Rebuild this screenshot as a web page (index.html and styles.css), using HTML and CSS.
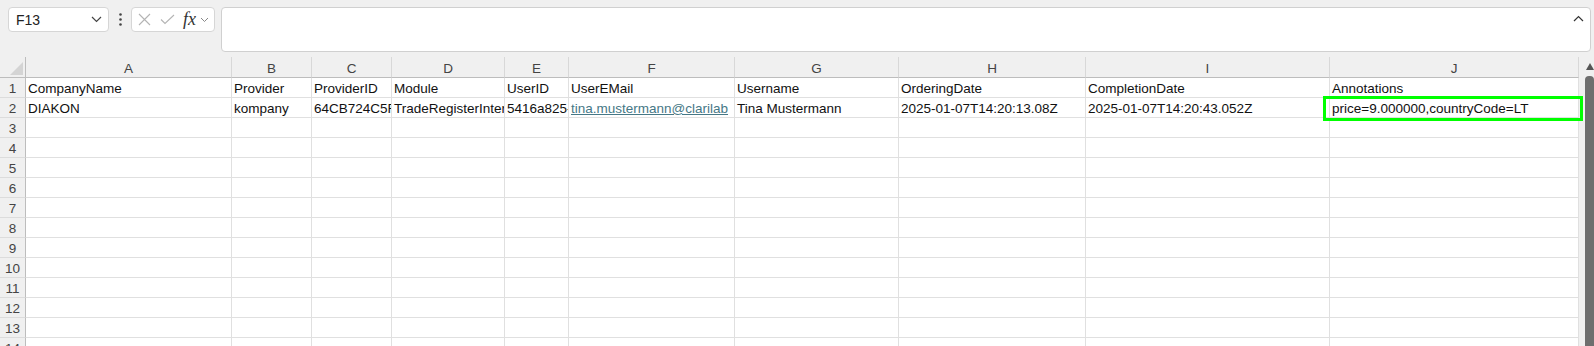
FILE: index.html
```html
<!DOCTYPE html>
<html lang="en">
<head>
    <meta charset="UTF-8">
    <title>Orders export</title>
    <link rel="stylesheet" href="styles.css">
</head>
<body>
    <!-- name box + formula bar -->
    <div class="toolbar">
        <div class="namebox">
            <span>F13</span>
            <svg width="11" height="7" viewBox="0 0 11 7"><polyline points="1,1 5.5,5.5 10,1" fill="none" stroke="#444" stroke-width="1.2"/></svg>
        </div>
        <div class="dots">
            <svg width="3" height="13" viewBox="0 0 3 13"><circle cx="1.5" cy="1.5" r="1.3" fill="#444"/><circle cx="1.5" cy="6.5" r="1.3" fill="#444"/><circle cx="1.5" cy="11.5" r="1.3" fill="#444"/></svg>
        </div>
        <div class="fxbox">
            <svg class="ico" width="13" height="13" viewBox="0 0 13 13"><path d="M1 1 L12 12 M12 1 L1 12" stroke="#b4b4b4" stroke-width="1.1"/></svg>
            <svg class="ico" width="15" height="11" viewBox="0 0 15 11"><polyline points="1,5.5 5,9.5 14,1" fill="none" stroke="#b4b4b4" stroke-width="1.1"/></svg>
            <span class="fx">fx</span>
            <svg width="9" height="6" viewBox="0 0 9 6"><polyline points="1,1 4.5,4.5 8,1" fill="none" stroke="#888" stroke-width="1"/></svg>
        </div>
        <div class="formula">
            <svg width="11" height="7" viewBox="0 0 11 7"><polyline points="1,6 5.5,1.5 10,6" fill="none" stroke="#333" stroke-width="1.2"/></svg>
        </div>
    </div>

    <div class="sheet">
        <div class="grid">
            <div class="row head">
                <div class="corner"><span class="tri"></span></div>
                <div>A</div><div>B</div><div>C</div><div>D</div><div>E</div><div>F</div><div>G</div><div>H</div><div>I</div><div>J</div>
            </div>
            <div class="row">
                <div class="rn">1</div>
                <div>CompanyName</div><div>Provider</div><div>ProviderID</div><div>Module</div><div>UserID</div><div>UserEMail</div><div>Username</div><div>OrderingDate</div><div>CompletionDate</div><div>Annotations</div>
            </div>
            <div class="row">
                <div class="rn">2</div>
                <div>DIAKON</div><div>kompany</div><div>64CB724C5FA</div><div>TradeRegisterInter</div><div>5416a825-</div><div><span class="link">tina.mustermann@clarilab</span></div><div>Tina Mustermann</div><div>2025-01-07T14:20:13.08Z</div><div>2025-01-07T14:20:43.052Z</div><div>price=9.000000,countryCode=LT</div>
            </div>
            <div class="row"><div class="rn">3</div><div></div><div></div><div></div><div></div><div></div><div></div><div></div><div></div><div></div><div></div></div>
            <div class="row"><div class="rn">4</div><div></div><div></div><div></div><div></div><div></div><div></div><div></div><div></div><div></div><div></div></div>
            <div class="row"><div class="rn">5</div><div></div><div></div><div></div><div></div><div></div><div></div><div></div><div></div><div></div><div></div></div>
            <div class="row"><div class="rn">6</div><div></div><div></div><div></div><div></div><div></div><div></div><div></div><div></div><div></div><div></div></div>
            <div class="row"><div class="rn">7</div><div></div><div></div><div></div><div></div><div></div><div></div><div></div><div></div><div></div><div></div></div>
            <div class="row"><div class="rn">8</div><div></div><div></div><div></div><div></div><div></div><div></div><div></div><div></div><div></div><div></div></div>
            <div class="row"><div class="rn">9</div><div></div><div></div><div></div><div></div><div></div><div></div><div></div><div></div><div></div><div></div></div>
            <div class="row"><div class="rn">10</div><div></div><div></div><div></div><div></div><div></div><div></div><div></div><div></div><div></div><div></div></div>
            <div class="row"><div class="rn">11</div><div></div><div></div><div></div><div></div><div></div><div></div><div></div><div></div><div></div><div></div></div>
            <div class="row"><div class="rn">12</div><div></div><div></div><div></div><div></div><div></div><div></div><div></div><div></div><div></div><div></div></div>
            <div class="row"><div class="rn">13</div><div></div><div></div><div></div><div></div><div></div><div></div><div></div><div></div><div></div><div></div></div>
            <div class="row"><div class="rn">14</div><div></div><div></div><div></div><div></div><div></div><div></div><div></div><div></div><div></div><div></div></div>
        </div>
        <div class="vscroll">
            <span class="up"></span>
            <div class="thumb"></div>
        </div>
        <!-- highlight drawn over J2 -->
        <div class="mark"></div>
    </div>
</body>
</html>
```

FILE: styles.css
```css
body {
    margin: 0;
    width: 1594px;
    height: 346px;
    overflow: hidden;
    background: #f0f0f0;
    font-family: "Liberation Sans", Arial, sans-serif;
    color: #111;
}
.toolbar {
    display: flex;
    align-items: flex-start;
    height: 57px;
    padding: 7px 3px 0 8px;
    box-sizing: border-box;
}
.namebox {
    width: 101px;
    height: 25px;
    box-sizing: border-box;
    background: #fff;
    border: 1px solid #d6d6d6;
    border-radius: 4px;
    display: flex;
    align-items: center;
    justify-content: space-between;
    padding: 0 6px 0 7px;
    font-size: 14px;
    color: #222;
}
.dots {
    width: 22px;
    height: 25px;
    display: flex;
    align-items: center;
    justify-content: center;
}
.fxbox {
    width: 84px;
    height: 25px;
    box-sizing: border-box;
    background: #fff;
    border: 1px solid #d6d6d6;
    border-radius: 4px;
    display: flex;
    align-items: center;
    padding: 0 3px 0 6px;
}
.fxbox .ico {
    margin-right: 9px;
}
.fx {
    font-family: "Liberation Serif", "DejaVu Serif", serif;
    font-style: italic;
    font-size: 18px;
    color: #333;
    margin-right: 4px;
    margin-left: -1px;
}
.formula {
    flex: 1;
    margin-left: 6px;
    height: 45px;
    box-sizing: border-box;
    background: #fff;
    border: 1px solid #d0d0d0;
    border-radius: 4px;
    display: flex;
    justify-content: flex-end;
    align-items: flex-start;
    padding: 7px 6px 0 0;
}
.sheet {
    display: flex;
    position: relative;
}
.grid {
    width: 1579px;
}
.row {
    display: grid;
    grid-template-columns: 26px 206px 80px 80px 113px 64px 166px 164px 187px 244px 249px;
    height: 20px;
}
.row > div {
    box-sizing: border-box;
    border-right: 1px solid #e0e0e0;
    border-bottom: 1px solid #e0e0e0;
    background: #fff;
    overflow: hidden;
    white-space: nowrap;
    font-size: 13.5px;
    line-height: 18px;
    padding: 2px 2px 0;
}
.row.head {
    height: 21px;
}
.row.head > div {
    background: #f0f0f0;
    color: #444;
    text-align: center;
    border-bottom: 1px solid #bdbdbd;
    border-right: 1px solid #d8d8d8;
    line-height: 17px;
    padding-top: 3px;
}
.row.head > .corner {
    position: relative;
    border-right: 1px solid #bdbdbd;
}
.tri {
    position: absolute;
    right: 2px;
    bottom: 2px;
    width: 0;
    height: 0;
    border-left: 13px solid transparent;
    border-bottom: 13px solid #d4d4d4;
}
.row > .rn {
    background: #f0f0f0;
    color: #444;
    text-align: center;
    padding: 2px 0 0;
    border-right: 1px solid #bdbdbd;
    border-bottom: 1px solid #dcdcdc;
}
.link {
    color: #467886;
    text-decoration: underline;
}
.vscroll {
    flex: 1;
    padding-left: 6px;
    display: flex;
    flex-direction: column;
}
.up {
    align-self: center;
    margin-top: 6px;
    width: 0;
    height: 0;
    border-left: 4px solid transparent;
    border-right: 4px solid transparent;
    border-bottom: 7px solid #555;
}
.thumb {
    margin-top: 6px;
    flex: 1;
    background: #6e6e6e;
    border-radius: 4px 4px 0 0;
}
.mark {
    position: absolute;
    left: 1323px;
    top: 39px;
    width: 260px;
    height: 25px;
    box-sizing: border-box;
    border: 3px solid #00ff00;
}
```
